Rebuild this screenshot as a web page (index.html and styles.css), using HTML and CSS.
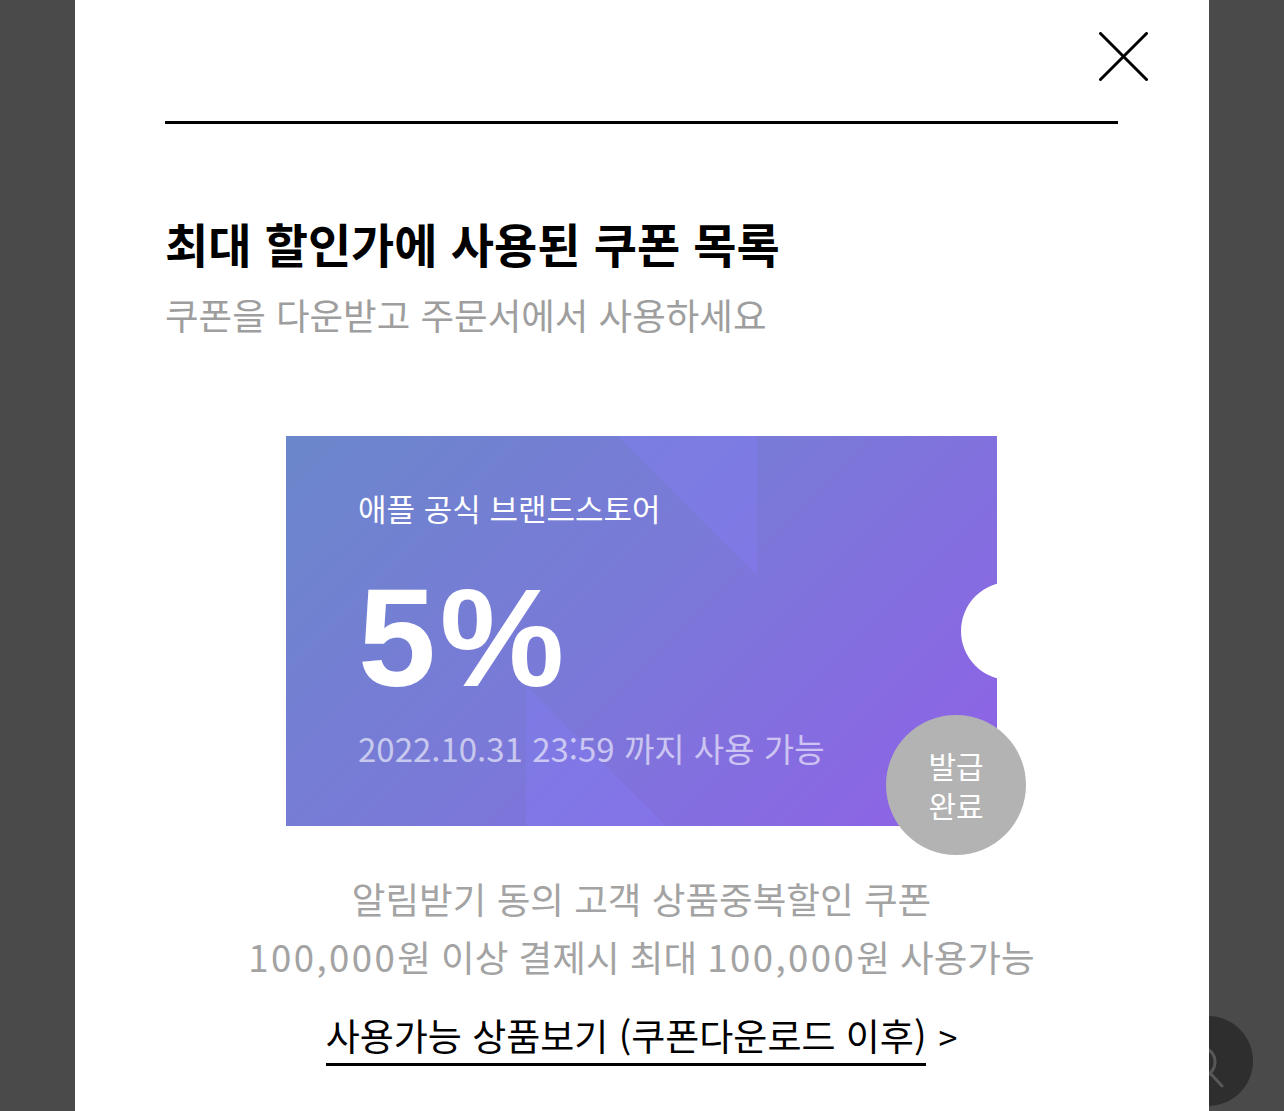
FILE: index.html
```html
<!DOCTYPE html>
<html lang="ko">
<head>
<meta charset="utf-8">
<title>쿠폰 목록</title>
<link rel="stylesheet" href="styles.css">
</head>
<body>
<div class="fab" aria-hidden="true">
  <svg class="fab-icon" width="90" height="90" viewBox="0 0 90 90">
    <circle cx="37" cy="46" r="15" fill="none" stroke="#585858" stroke-width="3"/>
    <path d="M48 58L59 70" stroke="#585858" stroke-width="3" stroke-linecap="round"/>
  </svg>
</div>
<div class="modal">
  <div class="modal-head">
    <button class="close" aria-label="닫기">
      <svg width="49" height="49" viewBox="0 0 49 49">
        <path d="M1.5 1.5L47.5 47.5M47.5 1.5L1.5 47.5" stroke="#000" stroke-width="3" stroke-linecap="round"/>
      </svg>
    </button>
  </div>
  <div class="content">
    <div class="rule"></div>
    <h2 class="title">최대 할인가에 사용된 쿠폰 목록</h2>
    <p class="subtitle">쿠폰을 다운받고 주문서에서 사용하세요</p>
    <div class="coupon">
      <span class="shape shape-top"></span>
      <span class="shape shape-bottom"></span>
      <p class="brand">애플 공식 브랜드스토어</p>
      <p class="rate">5%</p>
      <p class="expire">2022.10.31 23:59 까지 사용 가능</p>
      <span class="notch"></span>
      <span class="badge">발급<br>완료</span>
    </div>
    <p class="desc">알림받기 동의 고객 상품중복할인 쿠폰<br><span class="num">100,000</span>원 이상 결제시 최대 <span class="num">100,000</span>원 사용가능</p>
    <p class="more"><a class="more-link" href="#">사용가능 상품보기 (쿠폰다운로드 이후)</a><span class="more-arrow">&gt;</span></p>
  </div>
</div>
</body>
</html>
```

FILE: styles.css
```css
* { box-sizing: border-box; }

html, body {
  margin: 0;
  padding: 0;
  height: 100%;
}

body {
  background: #4a4a4a;
  font-family: "Noto Sans CJK KR", "Noto Sans", sans-serif;
  display: flex;
  justify-content: center;
  overflow: hidden;
}

.fab {
  position: fixed;
  left: 1163px;
  top: 1016px;
  width: 90px;
  height: 90px;
  border-radius: 50%;
  background: #2e2e2e;
  z-index: 0;
}

.fab-icon { display: block; }

.modal {
  position: relative;
  z-index: 1;
  width: 1134px;
  height: 100vh;
  background: #fff;
  overflow: hidden;
}

.modal-head {
  height: 121px;
  display: flex;
  justify-content: flex-end;
  align-items: flex-start;
  padding: 32px 61px 0 0;
}

.close {
  border: 0;
  background: none;
  padding: 0;
  width: 49px;
  height: 49px;
  cursor: pointer;
}

.close svg { display: block; }

.content {
  padding: 0 91px 0 90px;
}

.rule {
  height: 3px;
  background: #000;
}

.title {
  margin: 89px 0 0;
  font-size: 47px;
  line-height: 60px;
  font-weight: 700;
  color: #000;
}

.subtitle {
  margin: 19px 0 0;
  font-size: 36.5px;
  line-height: 46px;
  color: #9e9e9e;
}

.coupon {
  position: relative;
  width: 711px;
  height: 390px;
  margin: 98px auto 0;
  padding: 52px 0 0 72px;
  background: linear-gradient(135deg, #6b87cb 0%, #7b78d9 50%, #9060e8 100%);
  color: #fff;
}

.shape {
  position: absolute;
  width: 140px;
  height: 140px;
  background: rgba(135, 125, 255, 0.3);
}

.shape-top {
  left: 331px;
  top: 0;
  clip-path: polygon(0 0, 100% 0, 100% 100%);
}

.shape-bottom {
  left: 240px;
  top: 250px;
  clip-path: polygon(0 0, 0 100%, 100% 100%);
}

.brand {
  position: relative;
  margin: 0;
  font-size: 31px;
  line-height: 40px;
}

.rate {
  position: relative;
  margin: 40px 0 0;
  font-family: "Liberation Sans", Arial, sans-serif;
  font-weight: 700;
  font-size: 140px;
  line-height: 140px;
  letter-spacing: 4px;
}

.expire {
  position: relative;
  margin: 20px 0 0;
  font-size: 33px;
  line-height: 40px;
  color: rgba(255, 255, 255, 0.6);
}

.notch {
  position: absolute;
  left: 675px;
  top: 146px;
  width: 98px;
  height: 98px;
  border-radius: 50%;
  background: #fff;
}

.badge {
  position: absolute;
  left: 600px;
  top: 279px;
  width: 140px;
  height: 140px;
  border-radius: 50%;
  background: #b3b3b3;
  color: #fff;
  font-size: 30px;
  line-height: 40px;
  display: flex;
  align-items: center;
  justify-content: center;
  text-align: center;
}

.desc {
  margin: 44px 0 0;
  text-align: center;
  font-size: 36.6px;
  line-height: 58px;
  color: #a3a3a3;
}

.num {
  letter-spacing: 2.4px;
}

.more {
  margin: 26px 0 0;
  text-align: center;
  font-size: 37px;
  line-height: 46px;
}

.more-link {
  display: inline-block;
  color: #000;
  text-decoration: none;
  border-bottom: 3px solid #000;
  padding-bottom: 5px;
}

.more-arrow {
  display: inline-block;
  margin-left: 12px;
  color: #000;
  font-size: 34px;
}
```
